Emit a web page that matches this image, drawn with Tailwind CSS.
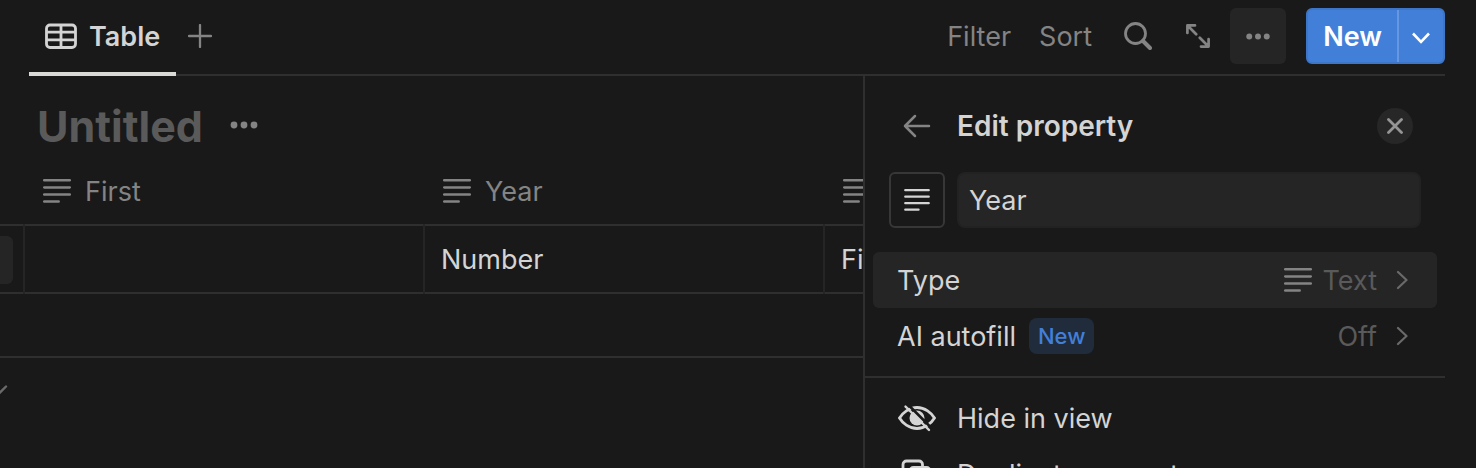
<!DOCTYPE html>
<html lang="en">
<head>
    <meta charset="UTF-8">
    <meta name="viewport" content="width=device-width, initial-scale=1.0">
    <title>Untitled</title>
    <script src="https://cdn.jsdelivr.net/npm/@tailwindcss/browser@4"></script>
</head>
<body class="bg-[#191919] text-[#d4d4d4] font-['Inter','Liberation_Sans',sans-serif] text-[27px] leading-9">

    <!-- icons used more than once -->
    <svg class="hidden">
        <symbol id="text-icon" viewBox="0 0 28 24">
            <path d="M1.2 1.3h25.600M1.2 8.4h25.600M1.2 15.500h25.600M1.2 22.600h14.500" fill="none" stroke="currentColor" stroke-width="2.500" stroke-linecap="round"/>
        </symbol>
        <symbol id="dots" viewBox="0 0 28 8">
            <circle cx="4" cy="4" r="3.4"/><circle cx="14" cy="4" r="3.4"/><circle cx="24" cy="4" r="3.4"/>
        </symbol>
        <symbol id="chevron" viewBox="0 0 12 20">
            <path d="M2 2l8.500 8-8.500 8" fill="none" stroke="currentColor" stroke-width="2.200" stroke-linecap="round" stroke-linejoin="round"/>
        </symbol>
    </svg>

    <div class="h-screen flex flex-col overflow-hidden">
        <header class="ml-[29px] mr-[31px] h-[76px] shrink-0 flex justify-between border-b-2 border-[#2f2f2f]">
            <div class="flex -mb-0.5">
                <button class="flex items-center gap-3 px-4 border-b-4 border-[#d9d9d6] font-semibold">
                    <svg class="w-8 h-[26px]" viewBox="0 0 32 26" fill="none" stroke="currentColor" stroke-width="2.8">
                        <rect x="1.5" y="2" width="29" height="22.5" rx="3.5"/>
                        <path d="M1.5 9.2h29M1.5 16.8h29M16 2v22.5"/>
                    </svg>
                    <span class="pt-0.5">Table</span>
                </button>
                <button class="px-3 pb-1" aria-label="Add view">
                    <svg class="w-6 h-6" viewBox="0 0 24 24" fill="none" stroke="#848484" stroke-width="2.3" stroke-linecap="round"><path d="M12 1v22M1 12h22"/></svg>
                </button>
            </div>
            <div class="flex items-center pb-0.5 text-[#848484]">
                <button class="mr-7 pt-0.5">Filter</button>
                <button class="mr-8 pt-0.5">Sort</button>
                <button class="mr-[34px]" aria-label="Search">
                    <svg class="w-7 h-7" viewBox="0 0 28 28" fill="none" stroke="currentColor" stroke-width="2.8" stroke-linecap="round"><circle cx="11.5" cy="11.5" r="10"/><path d="M19 19l7 7" stroke-width="4"/></svg>
                </button>
                <button class="mr-5" aria-label="Expand">
                    <svg class="w-6 h-6" viewBox="0 0 24 24" fill="none" stroke="currentColor" stroke-width="2.7" stroke-linecap="round" stroke-linejoin="round"><path d="M1.4 9V1.4h7.600M1.8 1.8l8.400 8.400M22.600 15v7.600h-7.600M22.200 22.200l-8.400-8.400"/></svg>
                </button>
                <button class="size-14 mr-5 rounded-md bg-[#252525] flex items-center justify-center" aria-label="More">
                    <svg class="w-7 h-[7px]" fill="currentColor"><use href="#dots"/></svg>
                </button>
                <div class="flex h-14 rounded-md bg-[#427fd9] border-2 border-[#3d76c9] text-white">
                    <button class="w-[89px] pt-0.5 font-semibold">New</button>
                    <button class="w-[46px] border-l-2 border-[#6598e0] flex items-center justify-center" aria-label="New options">
                        <svg class="w-[18px] h-3 mt-1" viewBox="0 0 18 12" fill="none" stroke="currentColor" stroke-width="2.6"><path d="M1 1.500l8 8.300 8-8.300"/></svg>
                    </button>
                </div>
            </div>
        </header>

        <div class="flex flex-1 min-h-0 mr-[31px]">
            <main class="flex-1 min-w-0 overflow-hidden">
                <div class="flex items-center gap-[26px] h-[84px] pl-[37px] pt-4">
                    <h1 class="text-[43px] leading-[52px] font-bold text-[#5a5a5a]">Untitled</h1>
                    <button class="pb-0.5" aria-label="Database options"><svg class="w-[30px] h-2" fill="#848484"><use href="#dots"/></svg></button>
                </div>
                <table class="table-fixed w-[1224px] border-collapse text-left">
                    <colgroup><col class="w-6"><col class="w-[400px]"><col class="w-[400px]"><col class="w-[400px]"></colgroup>
                    <thead>
                        <tr class="h-[65px] border-b-2 border-[#2f2f2f] text-[#848484]">
                            <td></td>
                            <th class="pl-[19px] pb-0.5 font-normal"><div class="flex items-center gap-[14px]"><svg class="w-7 h-6"><use href="#text-icon"/></svg><span class="pt-0.5">First</span></div></th>
                            <th class="pl-[19px] pb-0.5 font-normal"><div class="flex items-center gap-[14px]"><svg class="w-7 h-6"><use href="#text-icon"/></svg><span class="pt-0.5">Year</span></div></th>
                            <th class="pl-[19px] pb-0.5 font-normal"><div class="flex items-center gap-[14px]"><svg class="w-7 h-6"><use href="#text-icon"/></svg><span class="pt-0.5">Last</span></div></th>
                        </tr>
                    </thead>
                    <tbody>
                        <tr class="h-[68px] border-b-2 border-b-[#2f2f2f]">
                            <td class="pt-0.5 border-r-2 border-r-[#252525]"><div class="w-[13px] h-12 rounded-r-md bg-[#252525]"></div></td>
                            <td class="pt-0.5 border-r-2 border-r-[#252525] pl-4"></td>
                            <td class="pt-0.5 border-r-2 border-r-[#252525] pl-4">Number</td>
                            <td class="pt-0.5 pl-4">Field</td>
                        </tr>
                        <tr class="h-16 border-b-2 border-b-[#2f2f2f]"><td colspan="4"></td></tr>
                    </tbody>
                </table>
                <button class="block mt-[26px]" aria-label="Calculate">
                    <svg class="w-2 h-3" viewBox="0 0 8 12" fill="none" stroke="#6a6a6a" stroke-width="2.4" stroke-linecap="round"><path d="M-2 10.500l8-8"/></svg>
                </button>
            </main>

            <aside class="w-[582px] shrink-0 border-l-2 border-[#2f2f2f]">
                <div class="flex items-center pl-[38px] pr-8 pt-8 pb-7">
                    <button class="mr-[26px]" aria-label="Back">
                        <svg class="w-7 h-6" viewBox="0 0 28 24" fill="none" stroke="#848484" stroke-width="2.500" stroke-linecap="round" stroke-linejoin="round"><path d="M12 2L2 12l10 10M2 12h24"/></svg>
                    </button>
                    <h2 class="text-[28px] leading-9 font-semibold">Edit property</h2>
                    <button class="ml-auto size-9 rounded-full bg-[#272727] flex items-center justify-center" aria-label="Close">
                        <svg class="w-4 h-4" viewBox="0 0 16 16" fill="none" stroke="#959595" stroke-width="2.800" stroke-linecap="round"><path d="M1.500 1.500l13 13M14.500 1.500l-13 13"/></svg>
                    </button>
                </div>
                <div class="flex gap-3 px-6">
                    <button class="size-14 shrink-0 rounded-md border-2 border-[#373737] flex items-center justify-center" aria-label="Property icon">
                        <svg class="w-[26px] h-[22px]"><use href="#text-icon"/></svg>
                    </button>
                    <input type="text" value="Year" aria-label="Property name" class="flex-1 min-w-0 h-14 rounded-lg bg-[#252525] border-2 border-[#222222] px-2.5 outline-none">
                </div>
                <div class="px-2 pt-6 pb-3">
                    <button class="w-full h-14 px-6 rounded-md bg-[#252525] flex items-center text-left">
                        <span class="pt-0.5">Type</span>
                        <svg class="ml-auto mr-2.5 w-7 h-6 text-[#848484]"><use href="#text-icon"/></svg>
                        <span class="pt-0.5 text-[#5a5a5a]">Text</span>
                        <svg class="ml-[19px] mr-[5px] w-3 h-5 text-[#6a6a6a]"><use href="#chevron"/></svg>
                    </button>
                    <button class="w-full h-14 px-6 rounded-md flex items-center text-left">
                        <span class="pt-0.5">AI autofill</span>
                        <span class="ml-[13px] h-9 px-[9px] rounded-lg bg-[#202c3c] text-[#427fd9] text-[22px] font-medium">New</span>
                        <span class="ml-auto pt-0.5 text-[#5a5a5a]">Off</span>
                        <svg class="ml-[19px] mr-[5px] w-3 h-5 text-[#6a6a6a]"><use href="#chevron"/></svg>
                    </button>
                </div>
                <div class="border-t-2 border-[#2f2f2f] px-2 pt-3">
                    <button class="w-full h-14 px-6 flex items-center gap-5 text-left">
                        <svg class="w-10 h-7" viewBox="0 0 40 28" fill="none" stroke="currentColor" stroke-width="2.800" stroke-linecap="round">
                            <path d="M2.500 14c3-5 9.500-10.500 17.500-10.500s14.500 5.500 17.500 10.500c-3 5-9.500 10.500-17.500 10.500S5.500 19 2.500 14z"/>
                            <circle cx="20" cy="14" r="7.500" fill="currentColor" stroke="none"/>
                            <path d="M11 .5l23 23" stroke="#191919" stroke-width="2.600"/>
                            <path d="M8.500 2.500l23.500 23.500" stroke-width="2.400"/>
                        </svg>
                        <span class="pt-0.5">Hide in view</span>
                    </button>
                    <button class="w-full h-14 px-6 flex items-center gap-5 text-left">
                        <svg class="w-10 h-8" viewBox="0 0 40 32" fill="none" stroke="currentColor" stroke-width="2.800">
                            <path d="M12 22H9.500a3.500 3.500 0 0 1-3.500-3.500v-12A3.500 3.500 0 0 1 9.500 3h12.500a3.500 3.500 0 0 1 3.500 3.500V9"/>
                            <rect x="13" y="9.500" width="20" height="20" rx="3.500"/>
                        </svg>
                        <span class="pt-0.5">Duplicate property</span>
                    </button>
                </div>
            </aside>
        </div>
    </div>

</body>
</html>
